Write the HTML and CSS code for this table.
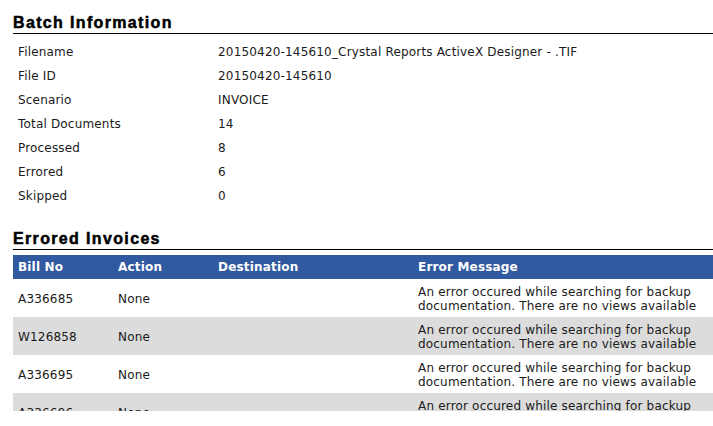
FILE: index.html
```html
<!DOCTYPE html>
<html>
<head>
<meta charset="utf-8">
<link rel="stylesheet" href="styles.css">
</head>
<body>
<div class="page">
  <h2 class="section-title">Batch Information</h2>
  <table class="info">
    <tr><td class="label">Filename</td><td>20150420-145610_Crystal Reports ActiveX Designer - .TIF</td></tr>
    <tr><td class="label">File ID</td><td>20150420-145610</td></tr>
    <tr><td class="label">Scenario</td><td>INVOICE</td></tr>
    <tr><td class="label">Total Documents</td><td>14</td></tr>
    <tr><td class="label">Processed</td><td>8</td></tr>
    <tr><td class="label">Errored</td><td>6</td></tr>
    <tr><td class="label">Skipped</td><td>0</td></tr>
  </table>

  <h2 class="section-title second">Errored Invoices</h2>
  <div class="grid-wrap">
    <table class="grid">
      <thead>
        <tr><th class="c1">Bill No</th><th class="c2">Action</th><th class="c3">Destination</th><th class="c4">Error Message</th></tr>
      </thead>
      <tbody>
        <tr><td>A336685</td><td>None</td><td></td><td>An error occured while searching for backup documentation. There are no views available</td></tr>
        <tr class="alt"><td>W126858</td><td>None</td><td></td><td>An error occured while searching for backup documentation. There are no views available</td></tr>
        <tr><td>A336695</td><td>None</td><td></td><td>An error occured while searching for backup documentation. There are no views available</td></tr>
        <tr class="alt"><td>A336696</td><td>None</td><td></td><td>An error occured while searching for backup documentation. There are no views available</td></tr>
      </tbody>
    </table>
  </div>
</div>
</body>
</html>
```
FILE: styles.css
```css
html, body {
  margin: 0;
  padding: 0;
  background: #fff;
  overflow: hidden;
}
.page {
  padding: 13px 0 0 13px;
  width: 700px;
  font-family: "DejaVu Sans", Verdana, sans-serif;
  font-size: 12px;
  letter-spacing: 0.18px;
  color: #1a1a1a;
}
.section-title {
  margin: 0;
  font-family: "Liberation Sans", Arial, sans-serif;
  font-weight: bold;
  font-size: 16px;
  line-height: 20px;
  letter-spacing: 1.35px;
  -webkit-text-stroke: 0.5px #000;
  color: #000;
  border-bottom: 1px solid #000;
  width: 720px;
}
.section-title.second {
  margin-top: 21px;
}
.info {
  border-collapse: collapse;
  margin-top: 6px;
}
.info td {
  height: 24px;
  padding: 0 5px;
  vertical-align: middle;
  white-space: nowrap;
}
.info td.label {
  width: 190px;
}
.grid-wrap {
  margin-top: 5px;
  height: 156px;
  overflow: hidden;
  width: 720px;
}
.grid {
  border-collapse: collapse;
  table-layout: fixed;
  width: 720px;
}
.grid th {
  background: #3159a0;
  color: #fff;
  font-weight: bold;
  text-align: left;
  height: 24px;
  padding: 0 5px;
  vertical-align: middle;
}
.grid .c1 { width: 90px; }
.grid .c2 { width: 90px; }
.grid .c3 { width: 190px; }
.grid td {
  height: 28px;
  padding: 6px 5px 4px;
  line-height: 14px;
  vertical-align: middle;
}
.grid td:last-child {
  padding-right: 20px;
}
.grid tr.alt td {
  background: #dcdcdc;
}
```
